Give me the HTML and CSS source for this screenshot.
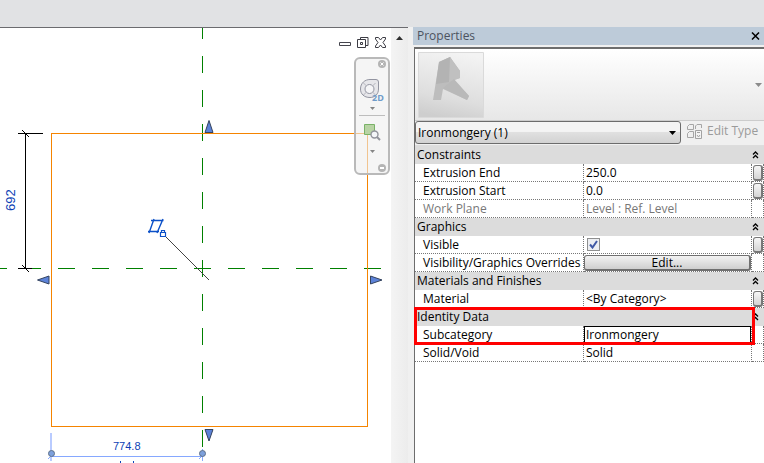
FILE: index.html
```html
<!DOCTYPE html>
<html lang="en">
<head>
<meta charset="utf-8">
<title>Family editor</title>
<link rel="stylesheet" href="styles.css">
</head>
<body>
<header class="ribbon"></header>
<main class="workspace">
  <section class="view">
    <svg class="drawing" role="img" aria-label="Plan view">
      <g fill="none" stroke="#008000" shape-rendering="crispEdges" stroke-dasharray="17 17">
        <path d="M202.500-6V440"/>
        <path d="M-10 240.500H391"/>
      </g>
      <path d="M51.500 105.500H367.500V398.500H51.500Z" fill="none" stroke="#f58400" shape-rendering="crispEdges"/>
      <g fill="none" stroke="#000">
        <path d="M18 105.500H43M18 240.500H32M25.500 105V241" shape-rendering="crispEdges"/>
        <path d="M22 102L29 109M22 237L29 244"/>
      </g>
      <path d="M165 208L209 252" stroke="#444"/>
      <g fill="#5c82d8" stroke="#34435f">
        <path d="M209 92.500L213 104.500H205Z"/>
        <path d="M37.500 252L49 248V256Z"/>
        <path d="M382 252L370.500 248V256Z"/>
        <path d="M209 413L205 401.500H213Z"/>
      </g>
      <g fill="none" stroke="#0b50c8">
        <path d="M151 192.500H163.500M148 203.500H159M154 191L149 205M163 191L157 205" stroke-width="1.400"/>
        <path d="M160.500 204.500H165.500V208.500H160.500ZM161.500 204V202.500H164.500V204" stroke-width="1.200"/>
      </g>
      <g fill="none" stroke="#86a8ff">
        <path d="M51 428.500H203" shape-rendering="crispEdges"/>
        <path d="M51 405V433" stroke="#b9cbff" stroke-width="2"/>
        <path d="M202.500 421V433M48 431L54 425M199 431L205 425"/>
      </g>
      <g fill="#7da0dc" stroke="#5f7189"><circle cx="51.500" cy="425.500" r="3"/><circle cx="202.500" cy="425.500" r="3"/></g>
      <path d="M120.500 433V436M133.500 433V436" stroke="#0b45b8"/>
      <text class="dimension" x="113" y="422">774.8</text>
      <text class="dimension dimension-large" transform="translate(15 183) rotate(-90)">692</text>
    </svg>
    <div class="window-buttons">
      <button aria-label="Minimize"><svg width="13" height="13"><path d="M1.500 6.500H12.500V9.500H1.500Z" fill="#fff" stroke="#45454d"/></svg></button>
      <button aria-label="Restore"><svg width="13" height="13"><path d="M4.500 3.500V1.500H12V9.500H9.500M1.500 3.500H9.500V11.500H1.500ZM4.500 6.500H6.500V8.500H4.500Z" fill="none" stroke="#3c3c44"/></svg></button>
      <button aria-label="Close view"><svg width="13" height="13"><path d="M1.500 1.500H4.500L6.500 4 8.500 1.500H11.500V3L9 6.500 11.500 10V11.500H8.500L6.500 9 4.500 11.500H1.500V10L4 6.500 1.500 3Z" fill="#fff" stroke="#3c3c44"/></svg></button>
    </div>
    <nav class="navbar" aria-label="Navigation bar">
      <button class="nav-corner" aria-label="Close bar"><svg width="8" height="8"><circle cx="4" cy="4" r="4" fill="#b4b4b4"/><path d="M2.500 2.500L5.500 5.500M5.500 2.500L2.500 5.500" stroke="#fff"/></svg></button>
      <button class="nav-tool" aria-label="2D steering wheel"><svg width="28" height="28">
        <path d="M12 2.500H18Q20.500 2.500 20.500 5V12C20.500 17 17 20.500 12 20.500C6 20.500 2.500 17 2.500 12C2.500 6 7 2.500 12 2.500Z" fill="#e6e6ea" stroke="#9294a0"/>
        <circle cx="11.500" cy="12" r="4.500" fill="#f5f5f7" stroke="#9294a0"/><path d="M5.500 18L8.500 15M14.500 15L17.500 18M5.500 6L8.500 9M14.500 9L17.500 6" stroke="#b4b5bd"/>
        <text class="wheel-label" x="14" y="24">2D</text></svg></button>
      <button class="nav-arrow" aria-label="Wheel options"><svg width="5" height="3"><path d="M0 0H5L2.500 3Z" fill="#858585"/></svg></button>
      <hr>
      <button class="nav-zoom" aria-label="Zoom in region"><svg width="28" height="18"><path d="M6.500 1.500H16.500V11.500H6.500Z" fill="#b8d3a4" stroke="#79b267"/><circle cx="16.500" cy="11.500" r="3.500" fill="#f3f5f8" stroke="#92949c" stroke-width="1.400"/><path d="M19 14L22 17" stroke="#92949c" stroke-width="2"/></svg></button>
      <button class="nav-arrow nav-arrow-low" aria-label="Zoom options"><svg width="5" height="3"><path d="M0 0H5L2.500 3Z" fill="#858585"/></svg></button>
      <button class="nav-corner" aria-label="Customize"><svg width="8" height="8"><circle cx="4" cy="4" r="4" fill="#b4b4b4"/><path d="M2 4H6" stroke="#fff" stroke-width="2"/></svg></button>
    </nav>
  </section>
  <div class="scrollbar"><button aria-label="Scroll up"><svg width="7" height="4"><path d="M0 4H7L3.500 0Z" fill="#303030"/></svg></button></div>
  <aside class="palette">
    <header class="palette-title"><h1>Properties</h1><button aria-label="Close"><svg width="9" height="8"><path d="M1 .5L8 7.500M8 .5L1 7.500" stroke="#000" stroke-width="1.500"/></svg></button></header>
    <div class="palette-body">
      <div class="preview">
        <svg class="logo" width="66" height="66" role="img" aria-label="Family preview">
          <defs><linearGradient id="shade" x1=".6" y1="0" x2=".4" y2="1"><stop offset="0" stop-color="#f3f3f3"/><stop offset=".7" stop-color="#dedede"/><stop offset="1" stop-color="#cecece"/></linearGradient></defs>
          <path d="M.5.5H65.500V65.500H.5Z" fill="url(#shade)" stroke="#dadada"/>
          <path d="M21 10L32 5 42 19V26L36 28 51 44 49 48 25 37 23 48H15Z" fill="#bdbdbd"/>
          <path d="M21 10L32 5 39 21 31 30 18 32Z" fill="#b3b3b3"/><path d="M32 5L42 19V26L31 30Z" fill="#c0c0c0"/><path d="M36 27L51 44 49 48 25 36Z" fill="#b9b9b9"/>
        </svg>
        <button class="preview-arrow" aria-label="Change type"><svg width="7" height="4"><path d="M0 0H7L3.500 4Z" fill="#8b8b8b"/></svg></button>
      </div>
      <div class="selector">
        <div class="filter">
          <select aria-label="Selection filter"><option>Ironmongery (1)</option></select>
          <svg width="7" height="4"><path d="M0 0H7L3.500 4Z" fill="#000"/></svg>
        </div>
        <button class="edit-type" disabled><svg width="17" height="17"><path d="M3.500 1.500H7.500V6.500H1.500V3.500ZM9.500 6V3L11 1.500H15.500V5M3.500 8.500H7.500V14.500H1.500V10.500Z" fill="none" stroke="#a6a6a6"/><path d="M9.500 7.500H15.500V15.500H9.500Z" fill="#f4f4f4" stroke="#a2a2a2"/><path d="M11 9.500H14M11 12L12.500 14 14 12" fill="none" stroke="#a2a2a2"/></svg>Edit Type</button>
      </div>
      <div class="grid-wrap">
      <table class="properties">
        <colgroup><col class="col-name"><col><col class="col-button"></colgroup>
        <tbody>
          <tr class="group"><th colspan="2">Constraints</th><td><button class="fold" aria-label="Collapse Constraints"><svg width="7" height="8"><path d="M1 3.500L3.500 1 6 3.500M1 7L3.500 4.500 6 7" fill="none" stroke="#000" stroke-width="1.300"/></svg></button></td></tr>
          <tr><th><label for="end">Extrusion End</label></th><td><input id="end" value="250.0"></td><td><button class="associate" aria-label="Associate Extrusion End"></button></td></tr>
          <tr><th><label for="start">Extrusion Start</label></th><td><input id="start" value="0.0"></td><td><button class="associate" aria-label="Associate Extrusion Start"></button></td></tr>
          <tr class="readonly"><th><label for="plane">Work Plane</label></th><td><input id="plane" value="Level : Ref. Level" readonly></td><td></td></tr>
        </tbody>
        <tbody>
          <tr class="group"><th colspan="2">Graphics</th><td><button class="fold" aria-label="Collapse Graphics"><svg width="7" height="8"><path d="M1 3.500L3.500 1 6 3.500M1 7L3.500 4.500 6 7" fill="none" stroke="#000" stroke-width="1.300"/></svg></button></td></tr>
          <tr><th><label for="visible">Visible</label></th><td><span class="check"><input id="visible" type="checkbox" checked><svg width="9" height="9"><path d="M1 4.500L3.500 7.500 8 1" fill="none" stroke="#4059a5" stroke-width="2"/></svg></span></td><td><button class="associate" aria-label="Associate Visible"></button></td></tr>
          <tr><th>Visibility/Graphics Overrides</th><td><button class="edit">Edit...</button></td><td></td></tr>
        </tbody>
        <tbody>
          <tr class="group"><th colspan="2">Materials and Finishes</th><td><button class="fold" aria-label="Collapse Materials and Finishes"><svg width="7" height="8"><path d="M1 3.500L3.500 1 6 3.500M1 7L3.500 4.500 6 7" fill="none" stroke="#000" stroke-width="1.300"/></svg></button></td></tr>
          <tr><th><label for="material">Material</label></th><td><input id="material" value="&lt;By Category&gt;"></td><td><button class="associate" aria-label="Associate Material"></button></td></tr>
        </tbody>
        <tbody>
          <tr class="group"><th colspan="2">Identity Data</th><td><button class="fold" aria-label="Collapse Identity Data"><svg width="7" height="8"><path d="M1 3.500L3.500 1 6 3.500M1 7L3.500 4.500 6 7" fill="none" stroke="#000" stroke-width="1.300"/></svg></button></td></tr>
          <tr><th><label for="subcategory">Subcategory</label></th><td><input id="subcategory" class="active" value="Ironmongery"></td><td></td></tr>
          <tr><th><label for="solid">Solid/Void</label></th><td><input id="solid" value="Solid"></td><td></td></tr>
        </tbody>
      </table>
      <div class="callout"></div>
      </div>
    </div>
  </aside>
</main>
</body>
</html>
```
FILE: styles.css
```css
* { box-sizing: border-box; }
body {
  margin: 0;
  height: 100vh;
  display: flex;
  flex-direction: column;
  overflow: hidden;
  background: #f0f0f0;
  color: #000;
  font: 12px/18px "Open Sans", "Noto Sans", sans-serif;
}
button { padding: 0; border: 0; background: none; font: inherit; color: inherit; }
svg { display: block; }
.ribbon { flex: none; height: 27px; background: #e1e2e4; }
.workspace { flex: 1; min-height: 0; display: flex; }

.view {
  position: relative;
  flex: 1;
  min-width: 0;
  background: #fff;
  border-top: 1px solid #6b6b6f;
  overflow: hidden;
}
.drawing { width: 100%; height: 100%; }
.dimension { font: 11px "Liberation Sans", sans-serif; fill: #0b3fb5; }
.dimension-large { font-size: 13px; }
.window-buttons { position: absolute; top: 8px; right: 4px; display: flex; gap: 5px; }
.navbar {
  position: absolute;
  top: 29px;
  right: 1px;
  width: 36px;
  height: 118px;
  border: 2px solid #b9b9b9;
  border-radius: 6px;
  background: rgba(238, 238, 238, .6);
  display: flex;
  flex-direction: column;
}
.navbar hr { width: 26px; margin: 5px auto 0; border: 0; border-top: 1px solid #bdbdbd; }
.nav-corner { align-self: flex-end; margin: 1px 2px 0 0; }
.nav-tool { margin-top: 9px; align-self: center; }
.nav-arrow { margin-top: 2px; align-self: center; }
.nav-zoom { margin-top: 7px; align-self: center; }
.nav-arrow-low { margin-top: 9px; }
.navbar .nav-corner:last-child { margin-top: 11px; }
.wheel-label { font: bold 9px "Open Sans", sans-serif; fill: #6e9bc9; }

.scrollbar {
  flex: none;
  width: 17px;
  border-top: 1px solid #6b6b6f;
  background: linear-gradient(90deg, #f4f4f4, #ececec);
}
.scrollbar button { width: 100%; height: 20px; display: grid; place-items: center; }

.palette { flex: 0 0 351px; min-width: 0; margin-left: 5px; display: flex; flex-direction: column; }
.palette-title {
  height: 18px;
  padding: 0 4px;
  display: flex;
  justify-content: space-between;
  align-items: center;
  background: #bdcbd9;
  color: #4c5360;
}
.palette-title h1 { margin: 0; font: inherit; }
.palette-body {
  flex: 1;
  margin: 2px 0 0 1px;
  border-top: 2px solid #6d6d6d;
  border-left: 1px solid #6d6d6d;
  background: #fff;
}
.preview {
  height: 72px;
  padding: 3px 2px 3px 3px;
  display: flex;
  justify-content: space-between;
  align-items: center;
  border-bottom: 1px solid #ccc;
  background: linear-gradient(#fff, #e7e7e7);
}
.selector { height: 25px; display: flex; align-items: flex-start; background: #f0f0f0; border-bottom: 1px solid #ddd; }
.filter { position: relative; flex: 1; }
.filter select {
  appearance: none;
  display: block;
  width: 100%;
  height: 23px;
  padding: 0 2px;
  border: 1px solid #6c6c6c;
  border-radius: 3px;
  background: linear-gradient(#f4f4f4 0 45%, #e0e0e0 50%, #d2d2d2);
  color: #000;
  font: inherit;
}
.filter svg { position: absolute; right: 5px; top: 10px; }
.edit-type { width: 83px; height: 20px; padding-left: 5px; display: flex; align-items: center; gap: 4px; color: #9b9b9b; }

.grid-wrap { position: relative; }
.properties { width: 100%; table-layout: fixed; border-collapse: separate; border-spacing: 0; }
.col-name { width: 169px; }
.col-button { width: 12px; }
.properties th, .properties td {
  height: 18px;
  padding: 0;
  border-bottom: 1px dotted #777;
  border-right: 1px dotted #777;
  font-weight: normal;
  text-align: left;
  line-height: 17px;
  white-space: nowrap;
}
.properties th { padding-left: 8px; }
.properties .group th, .properties .group td {
  border-bottom: 1px solid #dcdcdc;
  border-right: 0;
  background: #dcdcdc;
}
.properties .group th { padding-left: 2px; }
.properties label { display: block; }
.properties input:not([type]) {
  display: block;
  width: 100%;
  height: 17px;
  padding: 0 2px;
  border: 0;
  background: none;
  color: inherit;
  font: inherit;
}
.properties input.active { padding: 0 1px; border: 1px solid #000; }
.readonly { color: #777; }
.fold { display: block; }
.associate {
  display: block;
  width: 10px;
  height: 16px;
  margin-left: 1px;
  border: 1px solid #777;
  border-right-width: 2px;
  border-bottom-width: 2px;
  border-radius: 3px;
  background: linear-gradient(#f6f6f6, #d4d4d4);
}
.edit {
  display: block;
  width: 100%;
  height: 16px;
  line-height: 13px;
  border: 1px solid #707070;
  border-right-width: 2px;
  border-bottom-width: 2px;
  border-radius: 3px;
  background: linear-gradient(#f3f3f3, #cfcfcf);
}
.check { position: relative; display: block; width: 13px; height: 13px; margin-left: 3px; }
.check input { appearance: none; display: block; width: 13px; height: 13px; margin: 0; border: 1px solid #8e8f8f; background: #eceef2; }
.check svg { position: absolute; left: 2px; top: 2px; pointer-events: none; }
.callout {
  position: absolute;
  top: 161px;
  left: -1px;
  right: 9px;
  height: 38px;
  border: 3px solid #f00;
  pointer-events: none;
}
```
